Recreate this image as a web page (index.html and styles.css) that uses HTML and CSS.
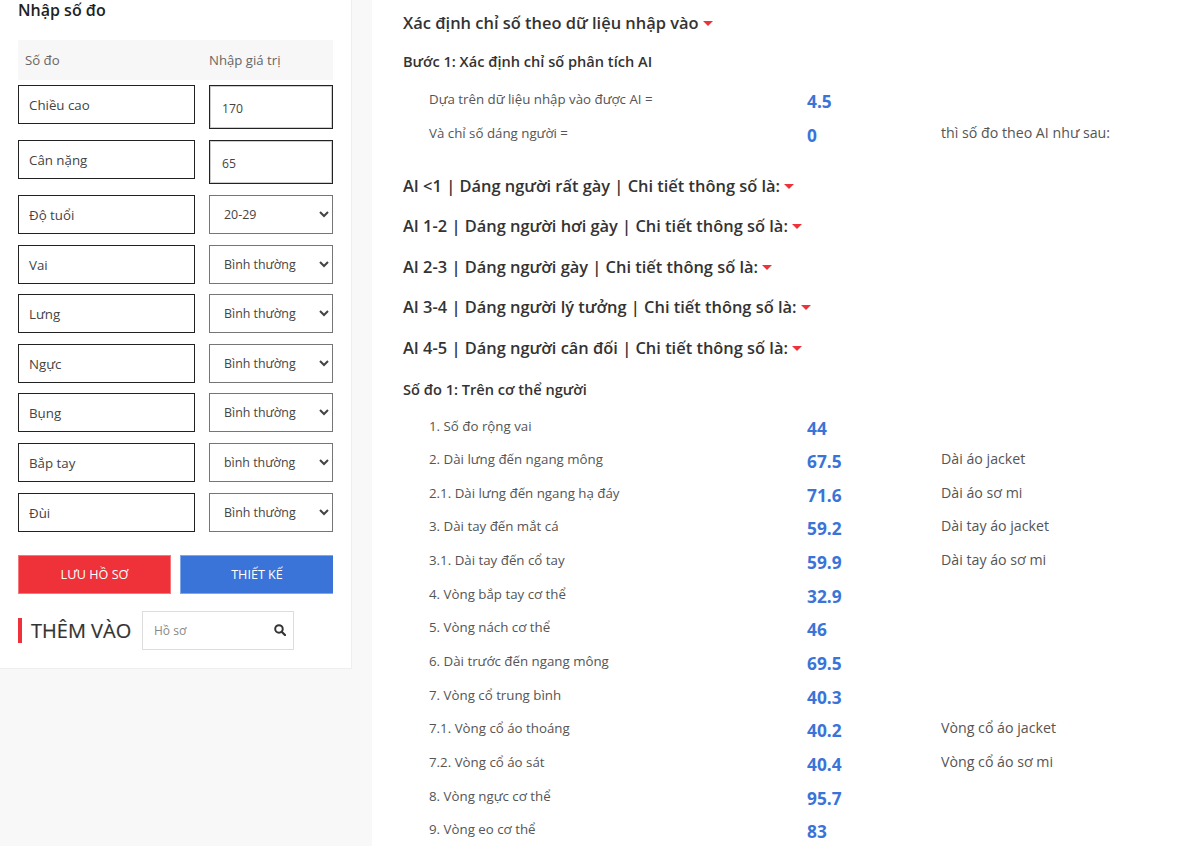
FILE: index.html
```html
<!DOCTYPE html>
<html lang="vi">
<head>
<meta charset="utf-8">
<title>Nhập số đo</title>
<link rel="stylesheet" href="styles.css">
</head>
<body>
<div class="page">
  <aside class="sidebar">
    <h2 class="side-title">Nhập số đo</h2>
    <div class="table-head"><span>Số đo</span><span>Nhập giá trị</span></div>
    <div class="form">
      <div class="row row-input"><div class="name">Chiều cao</div><input class="val" value="170"></div>
      <div class="row row-input"><div class="name">Cân nặng</div><input class="val" value="65"></div>
      <div class="row"><div class="name">Độ tuổi</div><select class="sel"><option>20-29</option></select></div>
      <div class="row"><div class="name">Vai</div><select class="sel"><option>Bình thường</option></select></div>
      <div class="row"><div class="name">Lưng</div><select class="sel"><option>Bình thường</option></select></div>
      <div class="row"><div class="name">Ngực</div><select class="sel"><option>Bình thường</option></select></div>
      <div class="row"><div class="name">Bụng</div><select class="sel"><option>Bình thường</option></select></div>
      <div class="row"><div class="name">Bắp tay</div><select class="sel"><option>bình thường</option></select></div>
      <div class="row"><div class="name">Đùi</div><select class="sel"><option>Bình thường</option></select></div>
    </div>
    <div class="actions">
      <button class="btn btn-red">LƯU HỒ SƠ</button>
      <button class="btn btn-blue">THIẾT KẾ</button>
    </div>
    <div class="add">
      <h3 class="add-title">THÊM VÀO</h3>
      <div class="search">
        <span class="placeholder">Hồ sơ</span>
        <svg class="search-icon" viewBox="0 0 14 14" width="12" height="12"><circle cx="5.8" cy="5.8" r="4.4" fill="none" stroke="#333" stroke-width="2.3"/><path d="M9 9l3.8 3.8" stroke="#333" stroke-width="2.6" stroke-linecap="round"/></svg>
      </div>
    </div>
  </aside>
  <main class="main">
    <h2 class="h-top">Xác định chỉ số theo dữ liệu nhập vào<i class="caret"></i></h2>
    <h3 class="h-step">Bước 1: Xác định chỉ số phân tích AI</h3>
    <div class="data">
      <div class="d-row"><span class="lbl">Dựa trên dữ liệu nhập vào được AI =</span><b class="num">4.5</b><span class="note"></span></div>
      <div class="d-row"><span class="lbl">Và chỉ số dáng người =</span><b class="num">0</b><span class="note">thì số đo theo AI như sau:</span></div>
    </div>
    <div class="ai-list">
      <h2 class="h-ai">AI &lt;1 | Dáng người rất gày | Chi tiết thông số là:<i class="caret"></i></h2>
      <h2 class="h-ai">AI 1-2 | Dáng người hơi gày | Chi tiết thông số là:<i class="caret"></i></h2>
      <h2 class="h-ai">AI 2-3 | Dáng người gày | Chi tiết thông số là:<i class="caret"></i></h2>
      <h2 class="h-ai">AI 3-4 | Dáng người lý tưởng | Chi tiết thông số là:<i class="caret"></i></h2>
      <h2 class="h-ai">AI 4-5 | Dáng người cân đối | Chi tiết thông số là:<i class="caret"></i></h2>
    </div>
    <h3 class="h-step h-body">Số đo 1: Trên cơ thể người</h3>
    <div class="data">
      <div class="d-row"><span class="lbl">1. Số đo rộng vai</span><b class="num">44</b><span class="note"></span></div>
      <div class="d-row"><span class="lbl">2. Dài lưng đến ngang mông</span><b class="num">67.5</b><span class="note">Dài áo jacket</span></div>
      <div class="d-row"><span class="lbl">2.1. Dài lưng đến ngang hạ đáy</span><b class="num">71.6</b><span class="note">Dài áo sơ mi</span></div>
      <div class="d-row"><span class="lbl">3. Dài tay đến mắt cá</span><b class="num">59.2</b><span class="note">Dài tay áo jacket</span></div>
      <div class="d-row"><span class="lbl">3.1. Dài tay đến cổ tay</span><b class="num">59.9</b><span class="note">Dài tay áo sơ mi</span></div>
      <div class="d-row"><span class="lbl">4. Vòng bắp tay cơ thể</span><b class="num">32.9</b><span class="note"></span></div>
      <div class="d-row"><span class="lbl">5. Vòng nách cơ thể</span><b class="num">46</b><span class="note"></span></div>
      <div class="d-row"><span class="lbl">6. Dài trước đến ngang mông</span><b class="num">69.5</b><span class="note"></span></div>
      <div class="d-row"><span class="lbl">7. Vòng cổ trung bình</span><b class="num">40.3</b><span class="note"></span></div>
      <div class="d-row"><span class="lbl">7.1. Vòng cổ áo thoáng</span><b class="num">40.2</b><span class="note">Vòng cổ áo jacket</span></div>
      <div class="d-row"><span class="lbl">7.2. Vòng cổ áo sát</span><b class="num">40.4</b><span class="note">Vòng cổ áo sơ mi</span></div>
      <div class="d-row"><span class="lbl">8. Vòng ngực cơ thể</span><b class="num">95.7</b><span class="note"></span></div>
      <div class="d-row"><span class="lbl">9. Vòng eo cơ thể</span><b class="num">83</b><span class="note"></span></div>
    </div>
  </main>
</div>
</body>
</html>
```
FILE: styles.css
```css
* { box-sizing: border-box; }
html, body { margin: 0; height: 846px; overflow: hidden; }
body { background: #f8f8f8; font-family: "Open Sans", "Noto Sans", sans-serif; color: #333; }
h2, h3 { margin: 0; }
.page { display: flex; align-items: flex-start; gap: 20px; height: 846px; }

.sidebar { width: 352px; height: 669px; flex: none; background: #fff; border-right: 1px solid #eee; border-bottom: 1px solid #eee; padding: 0 18px; }
.side-title { font-size: 16px; font-weight: 600; line-height: 20px; color: #222; height: 40px; }
.table-head { display: grid; grid-template-columns: 184px 1fr; height: 40px; background: #f7f7f7; align-items: center; padding-left: 7px; font-size: 13.2px; color: #666; margin-bottom: 5px; }

.form { display: flex; flex-direction: column; }
.row { display: grid; grid-template-columns: 177px 124px; column-gap: 14px; height: 39px; margin-bottom: 10.6px; align-items: start; }
.row-input { height: 44px; margin-bottom: 11px; }
.name { height: 39px; border: 1px solid #222; padding: 0 10px; line-height: 38px; font-size: 13.3px; color: #444; background: #fff; }
.val { width: 124px; height: 44px; border: 1px solid #222; box-shadow: inset 0 0 0 1px #ccc; padding: 3px 12px 0; font: 12.2px "Open Sans", sans-serif; color: #444; background: #fff; outline: none; }
.sel { width: 124px; height: 39px; border: 1px solid #767676; border-radius: 0; background: #fff; padding: 0 10px; font: 12.4px "Open Sans", sans-serif; color: #444; }

.actions { display: grid; grid-template-columns: 153px 153px; column-gap: 9px; margin-top: 12.4px; }
.btn { height: 39px; border: 1px solid; font: 12.6px "Open Sans", sans-serif; color: #fff; padding: 0; }
.btn-red { background: #ef3239; border-color: #f5767b; }
.btn-blue { background: #3a74d8; border-color: #7fa6e8; border-right: 0; }

.add { display: flex; align-items: center; margin-top: 17px; }
.add-title { font-size: 20px; font-weight: 400; line-height: 25px; color: #333; border-left: 4px solid #ef3239; padding-left: 9px; width: 124px; white-space: nowrap; -webkit-text-stroke: 0.2px #333; }
.search { width: 152px; height: 39px; border: 1px solid #ddd; display: flex; align-items: center; justify-content: space-between; padding: 0 7px 0 11px; background: #fff; }
.placeholder { font-size: 12px; color: #888; }

.main { flex: 1; height: 846px; background: #fff; padding: 13px 0 0 31px; overflow: hidden; }
.h-top { font-size: 16.45px; font-weight: 600; line-height: 20px; color: #333; }
.h-step { font-size: 14.6px; font-weight: 600; line-height: 20px; color: #333; margin-top: 18px; }
.h-body { margin-top: 0; }
.caret { display: inline-block; width: 0; height: 0; margin-left: 4px; vertical-align: 3px; border-left: 5px solid transparent; border-right: 5px solid transparent; border-top: 5px solid #ef3239; }
.data { margin: 18px 0 0 26px; }
.h-body + .data { margin-top: 17px; }
.d-row { display: grid; grid-template-columns: 378px 134px 1fr; height: 33.65px; align-items: start; }
.lbl { font-size: 13.3px; line-height: 20px; color: #555; }
.note { font-size: 14.2px; line-height: 20px; color: #555; }
.num { font-size: 17.3px; font-weight: 700; line-height: 24px; color: #3a74d8; padding-top: 1px; }
.ai-list { margin-top: 19.3px; display: flex; flex-direction: column; }
.h-ai { font-size: 16.42px; font-weight: 600; line-height: 20px; color: #333; margin-bottom: 20.6px; }
```
